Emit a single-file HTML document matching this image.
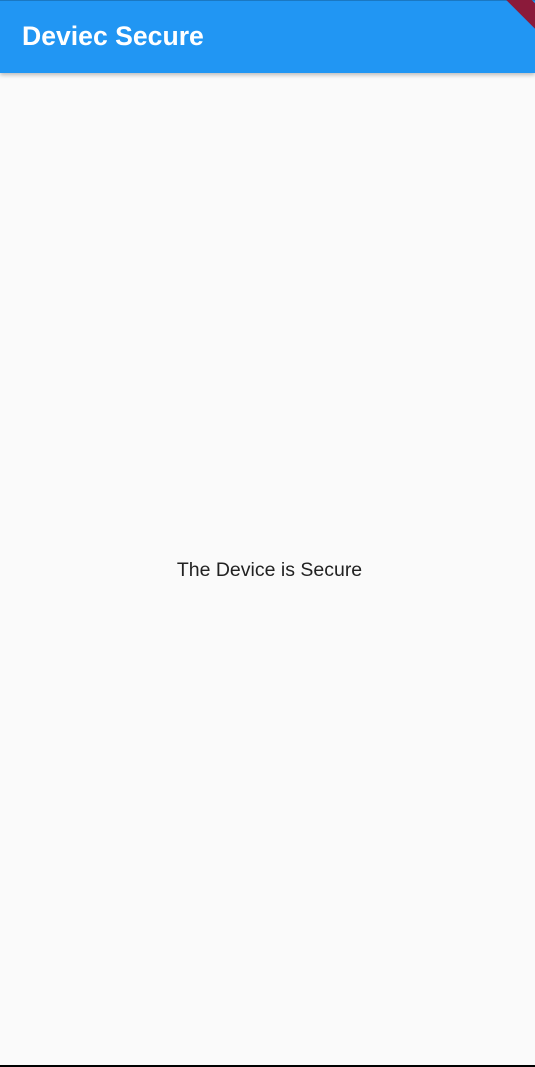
<!DOCTYPE html>
<html><head><style>
html,body{margin:0;padding:0;width:535px;height:1067px;overflow:hidden;background:#fafafa;font-family:"Liberation Sans",sans-serif;position:relative}
.bar{position:absolute;left:0;top:0;width:535px;height:73px;background:#2196f3;box-shadow:0 2px 4px rgba(0,0,0,.25)}
.top{position:absolute;left:0;top:0;width:535px;height:1px;background:#1a78c2}
.title{position:absolute;left:22px;top:21px;color:#fff;font-size:26.6px;font-weight:bold}
.ribbon{position:absolute;right:-40px;top:-8px;width:110px;height:18px;background:#8b1a3a;transform:rotate(45deg);transform-origin:center}
.txt{position:absolute;left:2px;width:535px;top:559px;text-align:center;font-size:19.5px;color:#222}
.bot{position:absolute;left:0;bottom:0;width:535px;height:2px;background:#000}
</style></head><body>
<div class="bar"><div class="top"></div><div class="title">Deviec Secure</div><div class="ribbon"></div></div>
<div class="txt">The Device is Secure</div>
<div class="bot"></div>
</body></html>
